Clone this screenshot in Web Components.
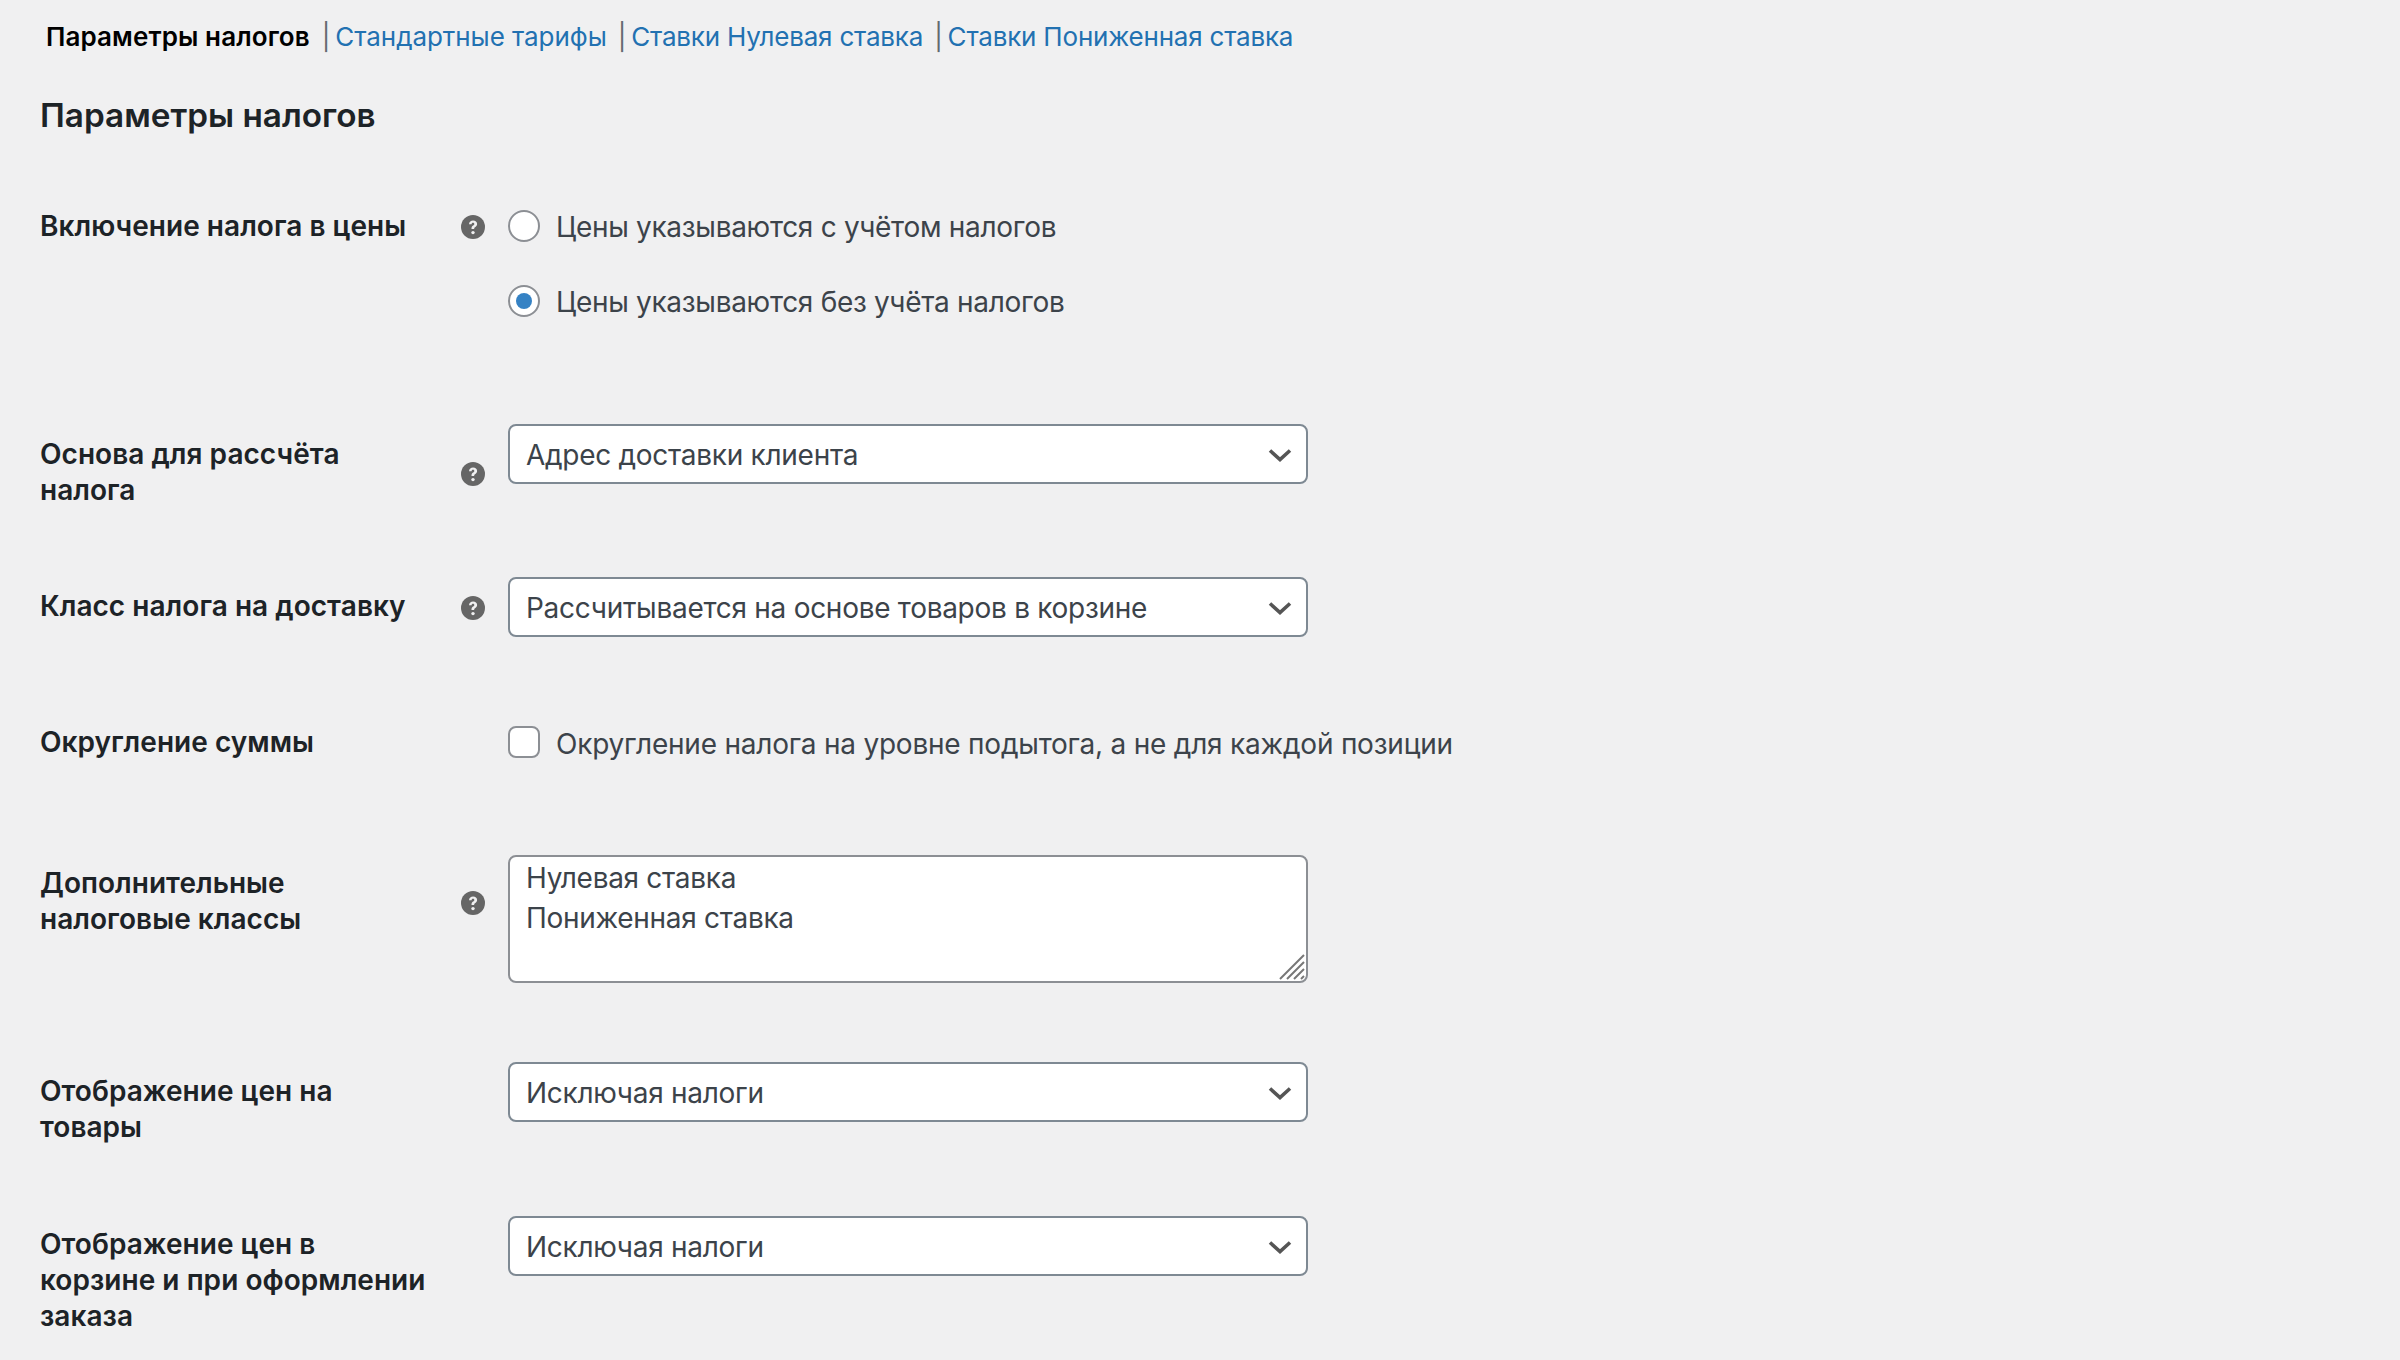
<!DOCTYPE html>
<html lang="ru">
<head>
<meta charset="utf-8">
<title>Параметры налогов</title>
<style>
  html, body { margin: 0; height: 100%; overflow: hidden; }
  body {
    background: #f0f0f1;
    color: #3c434a;
    font-family: Inter, "Noto Sans", "Liberation Sans", sans-serif;
    font-size: 28px;
    line-height: 36px;
  }
  tax-tabs { margin: 20px 0 0 40px; }
  tax-heading { margin: 39px 0 0 40px; }
  .r1 { margin-top: 71px; }
  .r2 { margin-top: 105px; }
  .r3 { margin-top: 69px; }
  .r4 { margin-top: 87px; }
  .r5 { margin-top: 95px; }
  .r6 { margin-top: 79px; }
  .r7 { margin-top: 71px; }
</style>
</head>
<body>

<tax-tabs>
  <tax-tab current>Параметры налогов</tax-tab>
  <tax-tab>Стандартные тарифы</tax-tab>
  <tax-tab>Ставки Нулевая ставка</tax-tab>
  <tax-tab>Ставки Пониженная ставка</tax-tab>
</tax-tabs>

<tax-heading>Параметры налогов</tax-heading>

<tax-row class="r1" tip="7">
  <span slot="label">Включение налога в цены</span>
  <tax-radio>Цены указываются с учётом налогов</tax-radio>
  <tax-radio checked>Цены указываются без учёта налогов</tax-radio>
</tax-row>

<tax-row class="r2" tip="38" label-top="12">
  <span slot="label">Основа для рассчёта налога</span>
  <tax-select>Адрес доставки клиента</tax-select>
</tax-row>

<tax-row class="r3" tip="19" label-top="11">
  <span slot="label">Класс налога на доставку</span>
  <tax-select>Рассчитывается на основе товаров в корзине</tax-select>
</tax-row>

<tax-row class="r4">
  <span slot="label">Округление суммы</span>
  <tax-check>Округление налога на уровне подытога, а не для каждой позиции</tax-check>
</tax-row>

<tax-row class="r5" tip="36" label-top="10">
  <span slot="label">Дополнительные налоговые классы</span>
  <tax-textarea>
    <div>Нулевая ставка</div>
    <div>Пониженная ставка</div>
  </tax-textarea>
</tax-row>

<tax-row class="r6" label-top="11">
  <span slot="label">Отображение цен на товары</span>
  <tax-select>Исключая налоги</tax-select>
</tax-row>

<tax-row class="r7" label-top="10">
  <span slot="label">Отображение цен в корзине и при оформлении заказа</span>
  <tax-select>Исключая налоги</tax-select>
</tax-row>

<script>
function shadow(el, html) {
  el.attachShadow({ mode: "open" }).innerHTML = html;
}

class TaxTabs extends HTMLElement {
  constructor() {
    super();
    shadow(this, `
      <style>
        :host { display: flex; align-items: center; font-size: 26px; line-height: 34px; }
      </style>
      <slot></slot>`);
  }
}

class TaxTab extends HTMLElement {
  constructor() {
    super();
    shadow(this, `
      <style>
        :host { display: inline-flex; align-items: center; color: #2271b1; letter-spacing: -0.06px; }
        :host([current]) { color: #000; font-weight: 600; margin-left: 6px; letter-spacing: 0.1px; }
        :host(:nth-child(n+3)) { letter-spacing: -0.2px; }
        :host(:not(:first-child))::before {
          content: "|"; color: #646970; margin: 0 5px 0 12px;
        }
        :host(:nth-child(n+3))::before { margin-left: 11px; }
      </style>
      <slot></slot>`);
  }
}

class TaxHeading extends HTMLElement {
  constructor() {
    super();
    shadow(this, `
      <style>
        :host { display: block; color: #1d2327; font-size: 33.3px; line-height: 44px; font-weight: 600; }
      </style>
      <slot></slot>`);
  }
}

class HelpTip extends HTMLElement {
  constructor() {
    super();
    shadow(this, `
      <style>
        :host { display: block; width: 24px; height: 24px; }
        svg { display: block; }
      </style>
      <svg width="24" height="24" viewBox="0 0 24 24">
        <circle cx="12" cy="12" r="12" fill="#666"/>
        <path d="M8 9.200c.2-2.300 1.900-3.600 4.100-3.600 2.300 0 4 1.400 4 3.400 0 1.400-.8 2.300-1.800 3-.9.600-1.100 1-1.100 1.800v.3h-2.700v-.6c0-1.400.5-2.200 1.600-2.900.9-.6 1.200-1 1.200-1.600 0-.7-.5-1.200-1.300-1.200s-1.300.5-1.400 1.400z" fill="#f0f0f1"/>
        <circle cx="12" cy="17.600" r="1.700" fill="#f0f0f1"/>
      </svg>`);
  }
}

class TaxRow extends HTMLElement {
  constructor() {
    super();
    shadow(this, `
      <style>
        :host { display: grid; grid-template-columns: 40px 392px 29px 24px 23px 1fr; }
        .label { grid-column: 2; color: #1d2327; font-weight: 600; line-height: 36px; letter-spacing: 0.04px; }
        .tip { grid-column: 4; align-self: start; }
        .control { grid-column: 6; display: flex; flex-direction: column; }
      </style>
      <div class="label"><slot name="label"></slot></div>
      <div class="tip"></div>
      <div class="control"><slot></slot></div>`);
  }
  connectedCallback() {
    const label = this.shadowRoot.querySelector(".label");
    label.style.paddingTop = (this.getAttribute("label-top") || 0) + "px";
    if (this.hasAttribute("tip")) {
      const tip = this.shadowRoot.querySelector(".tip");
      tip.style.marginTop = this.getAttribute("tip") + "px";
      tip.append(document.createElement("help-tip"));
    }
  }
}

class TaxRadio extends HTMLElement {
  constructor() {
    super();
    shadow(this, `
      <style>
        :host { display: flex; align-items: center; gap: 16px; height: 36px; letter-spacing: -0.3px; }
        :host(:not(:first-of-type)) { margin-top: 39px; }
        .box {
          box-sizing: border-box; width: 32px; height: 32px; border-radius: 50%;
          background: #fff; border: 2px solid #8c8f94;
          display: flex; align-items: center; justify-content: center;
        }
        :host([checked]) .box::before {
          content: ""; width: 16px; height: 16px; border-radius: 50%; background: #3582c4;
        }
        .text { padding-top: 2px; }
      </style>
      <span class="box"></span><span class="text"><slot></slot></span>`);
  }
}

class TaxCheck extends HTMLElement {
  constructor() {
    super();
    shadow(this, `
      <style>
        :host { display: flex; align-items: center; gap: 16px; height: 36px; white-space: nowrap; letter-spacing: -0.22px; }
        .box {
          box-sizing: border-box; width: 32px; height: 32px; border-radius: 8px;
          background: #fff; border: 2px solid #8c8f94;
        }
        .text { padding-top: 3px; }
      </style>
      <span class="box"></span><span class="text"><slot></slot></span>`);
  }
}

class TaxSelect extends HTMLElement {
  constructor() {
    super();
    shadow(this, `
      <style>
        :host {
          box-sizing: border-box; display: flex; align-items: center; justify-content: space-between;
          width: 800px; height: 60px; padding: 2px 14px 0 16px;
          background: #fff; border: 2px solid #7e8993; border-radius: 8px;
          letter-spacing: -0.28px;
        }
        svg { display: block; margin-top: 0; }
      </style>
      <span><slot></slot></span>
      <svg width="24" height="16" viewBox="0 0 24 16">
        <path d="M2 3.500 12 12.500 22 3.500" fill="none" stroke="#555" stroke-width="3.600"/>
      </svg>`);
  }
}

class TaxTextarea extends HTMLElement {
  constructor() {
    super();
    shadow(this, `
      <style>
        :host {
          box-sizing: border-box; display: block; position: relative;
          width: 800px; height: 128px; padding: 1px 16px;
          background: #fff; border: 2px solid #8c8f94; border-radius: 8px;
          line-height: 40px; letter-spacing: -0.3px;
        }
        svg { position: absolute; right: 0; bottom: 0; display: block; }
      </style>
      <slot></slot>
      <svg width="28" height="28" viewBox="0 0 28 28" fill="none" stroke="#777" stroke-width="2">
        <path d="M2 26 26 2M9 26 26 9M16 26 26 16M23 26 26 23"/>
      </svg>`);
  }
}

customElements.define("tax-tabs", TaxTabs);
customElements.define("tax-tab", TaxTab);
customElements.define("tax-heading", TaxHeading);
customElements.define("help-tip", HelpTip);
customElements.define("tax-row", TaxRow);
customElements.define("tax-radio", TaxRadio);
customElements.define("tax-check", TaxCheck);
customElements.define("tax-select", TaxSelect);
customElements.define("tax-textarea", TaxTextarea);
</script>
</body>
</html>
